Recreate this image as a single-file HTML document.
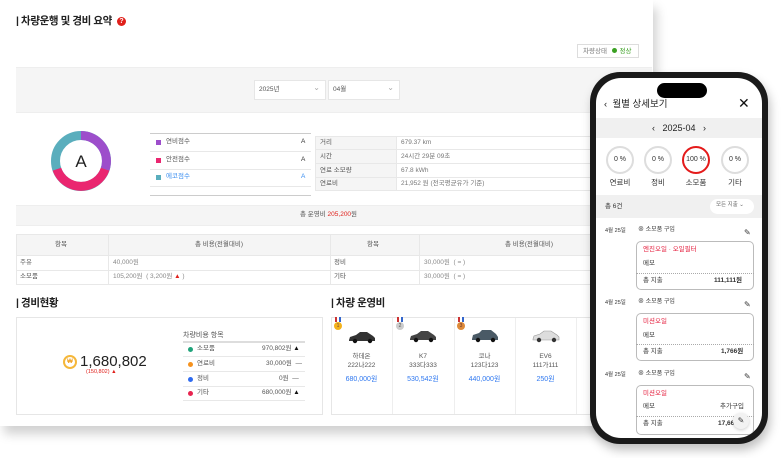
<!DOCTYPE html>
<html><head><meta charset="utf-8"><style>
*{margin:0;padding:0;box-sizing:border-box}
body{width:783px;height:458px;background:#fff;position:relative;overflow:hidden;font-family:"Liberation Sans","Noto Sans CJK KR",sans-serif;color:#333;line-height:1.1}
.a{position:absolute}
.t{font-size:6.5px;color:#555;white-space:nowrap;line-height:1}
.card{left:0;top:0;width:653px;height:426px;background:#fff;box-shadow:4px 8px 10px rgba(0,0,0,.18)}
.h{font-size:10.5px;font-weight:bold;color:#222;line-height:1;letter-spacing:-0.4px}
.gray{background:#f5f5f5}
.sel{background:#fff;border:1px solid #e6e6e6;height:20px;width:72px;top:80px;font-size:6.5px;color:#555;padding:6px 4px;line-height:1}
.sel:after{content:"⌄";position:absolute;right:5px;top:3px;color:#aaa;font-size:8px}
.line{height:1px;background:#e8e8e8}
</style></head><body>
<div class="a card"></div>
<div class="a h" style="left:16px;top:16px">| 차량운행 및 경비 요약</div>
<div class="a" style="left:117px;top:17px;width:9px;height:9px;border-radius:50%;background:#e0201b;color:#fff;font-size:7px;line-height:9px;text-align:center;font-weight:bold">?</div>
<div class="a" style="left:577px;top:44px;width:62px;height:14px;border:1px solid #ddd;font-size:6.5px;color:#777;padding:3px 5px;white-space:nowrap;line-height:1">차량상태 <span style="display:inline-block;width:5px;height:5px;border-radius:50%;background:#3aa022;margin:0 1px 0 3px"></span> <span style="color:#3aa022">정상</span></div>
<div class="a gray" style="left:16px;top:67px;width:636px;height:46px;border-top:1px solid #eee;border-bottom:1px solid #eee"></div>
<div class="a sel" style="left:254px">2025년</div>
<div class="a sel" style="left:328px">04월</div>
<svg class="a" style="left:50px;top:130px" width="62" height="62" viewBox="0 0 62 62">
<g fill="none" stroke-width="9">
<circle cx="31" cy="31" r="25.5" stroke="#5aaebd"/>
<path d="M31 5.5 A25.5 25.5 0 0 1 55.1 39.2" stroke="#9d4ecb"/>
<path d="M55.1 39.2 A25.5 25.5 0 0 1 6.9 39.2" stroke="#ea2670"/>
</g>
<text x="31" y="37" text-anchor="middle" font-size="17" fill="#222" font-family="Liberation Sans">A</text></svg>
<div class="a" style="left:150px;top:133px;width:161px;height:63px;border-top:1px solid #ccc;border-bottom:1px solid #ccc"></div>
<div class="a line" style="left:150px;top:151px;width:161px"></div>
<div class="a line" style="left:150px;top:169px;width:161px"></div>
<div class="a line" style="left:150px;top:186px;width:161px"></div>
<div class="a" style="left:156px;top:140px;width:5px;height:5px;background:#9d4ecb"></div><div class="a t" style="left:166px;top:139px">연비점수</div><div class="a t" style="left:301px;top:139px;color:#333">A</div>
<div class="a" style="left:156px;top:158px;width:5px;height:5px;background:#ea2670"></div><div class="a t" style="left:166px;top:157px">안전점수</div><div class="a t" style="left:301px;top:157px;color:#333">A</div>
<div class="a" style="left:156px;top:175px;width:5px;height:5px;background:#5aaebd"></div><div class="a t" style="left:166px;top:174px;color:#3a8ef0">에코점수</div><div class="a t" style="left:301px;top:174px;color:#3a8ef0">A</div>
<div class="a" style="left:315px;top:136px;width:337px;height:55px;border:1px solid #e8e8e8"></div>
<div class="a gray" style="left:316px;top:137px;width:81px;height:53px;border-right:1px solid #e8e8e8"></div>
<div class="a line" style="left:315px;top:149px;width:337px"></div>
<div class="a line" style="left:315px;top:163px;width:337px"></div>
<div class="a line" style="left:315px;top:177px;width:337px"></div>
<div class="a t" style="left:320px;top:140px">거리</div><div class="a t" style="left:401px;top:140px;color:#777">679.37 km</div>
<div class="a t" style="left:320px;top:154px">시간</div><div class="a t" style="left:401px;top:154px;color:#777">24시간 29분 09초</div>
<div class="a t" style="left:320px;top:168px">연료 소모량</div><div class="a t" style="left:401px;top:168px;color:#777">67.8 kWh</div>
<div class="a t" style="left:320px;top:181px">연료비</div><div class="a t" style="left:401px;top:181px;color:#777">21,952 원 (전국평균유가 기준)</div>
<div class="a gray" style="left:16px;top:205px;width:636px;height:21px;border-top:1px solid #eee;border-bottom:1px solid #eee"></div>
<div class="a t" style="left:300px;top:212px">총 운영비 <span style="color:#e0201b">205,200</span>원</div>
<div class="a" style="left:16px;top:234px;width:636px;height:51px;border:1px solid #e8e8e8"></div>
<div class="a gray" style="left:17px;top:235px;width:635px;height:21px;border-bottom:1px solid #e8e8e8"></div>
<div class="a line" style="left:16px;top:270px;width:636px"></div>
<div class="a" style="left:108px;top:234px;width:1px;height:51px;background:#e8e8e8"></div>
<div class="a" style="left:330px;top:234px;width:1px;height:51px;background:#e8e8e8"></div>
<div class="a" style="left:419px;top:234px;width:1px;height:51px;background:#e8e8e8"></div>
<div class="a t" style="left:55px;top:242px">항목</div><div class="a t" style="left:195px;top:242px">총 비용(전월대비)</div><div class="a t" style="left:367px;top:242px">항목</div><div class="a t" style="left:505px;top:242px">총 비용(전월대비)</div>
<div class="a t" style="left:20px;top:260px">주유</div><div class="a t" style="left:113px;top:260px;color:#888">40,000원</div><div class="a t" style="left:334px;top:260px">정비</div><div class="a t" style="left:424px;top:260px;color:#888">30,000원 &nbsp;( = )</div>
<div class="a t" style="left:20px;top:274px">소모품</div><div class="a t" style="left:113px;top:274px;color:#888">105,200원 &nbsp;( 3,200원 <span style="color:#e0201b">▲</span> )</div><div class="a t" style="left:334px;top:274px">기타</div><div class="a t" style="left:424px;top:274px;color:#888">30,000원 &nbsp;( = )</div>
<div class="a h" style="left:16px;top:298px">| 경비현황</div>
<div class="a" style="left:16px;top:317px;width:307px;height:98px;border:1px solid #e6e6e6"></div>
<div class="a" style="left:63px;top:355px;width:14px;height:14px;border-radius:50%;border:2px solid #f5b73a;color:#f0a020;font-size:6px;text-align:center;line-height:10px;font-weight:bold">₩</div>
<div class="a" style="left:80px;top:354px;font-size:15px;color:#222;line-height:1">1,680,802</div>
<div class="a" style="left:86px;top:370px;font-size:5.5px;color:#e0201b;line-height:1">(150,802) ▲</div>
<div class="a" style="left:183px;top:332px;font-size:7px;color:#555;line-height:1">차량비용 항목</div>
<div class="a" style="left:183px;top:341px;width:122px;height:2px;background:#ddd"></div>
<div class="a line" style="left:183px;top:356px;width:122px"></div>
<div class="a line" style="left:183px;top:371px;width:122px"></div>
<div class="a line" style="left:183px;top:386px;width:122px"></div>
<div class="a line" style="left:183px;top:400px;width:122px"></div>
<div class="a" style="left:188px;top:347px;width:5px;height:5px;border-radius:50%;background:#1fa37a"></div><div class="a t" style="left:197px;top:346px">소모품</div><div class="a t" style="left:262px;top:346px">970,802원 <b style="color:#111">▲</b></div>
<div class="a" style="left:188px;top:362px;width:5px;height:5px;border-radius:50%;background:#f5921e"></div><div class="a t" style="left:197px;top:361px">연료비</div><div class="a t" style="left:266px;top:361px">30,000원 &nbsp;—</div>
<div class="a" style="left:188px;top:377px;width:5px;height:5px;border-radius:50%;background:#2f6bf0"></div><div class="a t" style="left:197px;top:376px">정비</div><div class="a t" style="left:279px;top:376px">0원 &nbsp;—</div>
<div class="a" style="left:188px;top:391px;width:5px;height:5px;border-radius:50%;background:#e8244f"></div><div class="a t" style="left:197px;top:390px">기타</div><div class="a t" style="left:262px;top:390px">680,000원 <b style="color:#111">▲</b></div>
<div class="a h" style="left:331px;top:298px">| 차량 운영비</div>
<div class="a" style="left:331px;top:317px;width:280px;height:98px;border:1px solid #e6e6e6"></div>
<div class="a" style="left:392px;top:318px;width:1px;height:96px;background:#eee"></div>
<div class="a" style="left:454px;top:318px;width:1px;height:96px;background:#eee"></div>
<div class="a" style="left:515px;top:318px;width:1px;height:96px;background:#eee"></div>
<div class="a" style="left:576px;top:318px;width:1px;height:96px;background:#eee"></div>
<div class="a" style="left:334px;top:322px;width:8px;height:8px;border-radius:50%;background:#f3b21c;font-size:5px;text-align:center;line-height:8px;color:#744">1</div>
<div class="a" style="left:396px;top:322px;width:8px;height:8px;border-radius:50%;background:#ccc;font-size:5px;text-align:center;line-height:8px;color:#555">2</div>
<div class="a" style="left:457px;top:322px;width:8px;height:8px;border-radius:50%;background:#de8b3a;font-size:5px;text-align:center;line-height:8px;color:#633">3</div>
<div class="a" style="left:335px;top:317px;width:6px;height:5px;background:linear-gradient(90deg,#c33 33%,#fff 33% 66%,#36c 66%)"></div>
<div class="a" style="left:397px;top:317px;width:6px;height:5px;background:linear-gradient(90deg,#c33 33%,#fff 33% 66%,#36c 66%)"></div>
<div class="a" style="left:458px;top:317px;width:6px;height:5px;background:linear-gradient(90deg,#c33 33%,#fff 33% 66%,#36c 66%)"></div>
<svg class="a" style="left:347px;top:330px" width="30" height="14" viewBox="0 0 30 14"><path d="M2 10 L3 7 L9 5 L13 2 L20 2 L26 6 L28 8 L28 11 L2 11Z" fill="#333"/><circle cx="8" cy="11" r="2.2" fill="#111"/><circle cx="23" cy="11" r="2.2" fill="#111"/></svg>
<svg class="a" style="left:408px;top:329px" width="30" height="14" viewBox="0 0 30 14"><path d="M2 10 L3 7 L9 5 L13 2 L20 2 L26 6 L28 8 L28 11 L2 11Z" fill="#444"/><circle cx="8" cy="11" r="2.2" fill="#111"/><circle cx="23" cy="11" r="2.2" fill="#111"/></svg>
<svg class="a" style="left:470px;top:329px" width="30" height="14" viewBox="0 0 30 14"><path d="M2 10 L3 6 L9 4 L12 1 L21 1 L26 5 L28 8 L28 11 L2 11Z" fill="#4a5a66"/><circle cx="8" cy="11" r="2.2" fill="#111"/><circle cx="23" cy="11" r="2.2" fill="#111"/></svg>
<svg class="a" style="left:531px;top:329px" width="30" height="14" viewBox="0 0 30 14"><path d="M2 10 L3 7 L9 5 L13 2 L20 2 L26 6 L28 8 L28 11 L2 11Z" fill="#ddd" stroke="#999" stroke-width=".6"/><circle cx="8" cy="11" r="2.2" fill="#333"/><circle cx="23" cy="11" r="2.2" fill="#333"/></svg>
<div class="a t" style="left:331px;top:352px;width:61px;text-align:center;line-height:9px">하데온<br>222나222</div>
<div class="a t" style="left:392px;top:352px;width:62px;text-align:center;line-height:9px">K7<br>333다333</div>
<div class="a t" style="left:454px;top:352px;width:61px;text-align:center;line-height:9px">코나<br>123다123</div>
<div class="a t" style="left:515px;top:352px;width:61px;text-align:center;line-height:9px">EV6<br>111가111</div>
<div class="a" style="left:331px;top:376px;width:61px;text-align:center;font-size:7px;color:#2f78f0;line-height:1">680,000원</div>
<div class="a" style="left:392px;top:376px;width:62px;text-align:center;font-size:7px;color:#2f78f0;line-height:1">530,542원</div>
<div class="a" style="left:454px;top:376px;width:61px;text-align:center;font-size:7px;color:#2f78f0;line-height:1">440,000원</div>
<div class="a" style="left:515px;top:376px;width:61px;text-align:center;font-size:7px;color:#2f78f0;line-height:1">250원</div>
<div class="a" style="left:590px;top:72px;width:178px;height:372px;border-radius:30px;background:#1a1a1a;box-shadow:2px 6px 10px rgba(0,0,0,.25)"></div>
<div class="a" style="left:596px;top:78px;width:166px;height:360px;border-radius:25px;background:#fff;overflow:hidden">
 <div class="a" style="left:61px;top:5px;width:50px;height:15px;border-radius:8px;background:#000"></div>
 <div class="a" style="left:8px;top:22px;font-size:9.5px;color:#222">‹ &nbsp;월별 상세보기</div>
 <div class="a" style="left:142px;top:18px;font-size:14px;color:#111">✕</div>
 <div class="a" style="left:0;top:40px;width:166px;height:20px;background:#f0f0f0;text-align:center;font-size:9px;line-height:20px;color:#222">‹ &nbsp;&nbsp;2025-04&nbsp;&nbsp; ›</div>
 <div class="a" style="left:10px;top:68px;width:28px;height:28px;border-radius:50%;border:2.5px solid #ddd;font-size:7px;text-align:center;line-height:23px">0 %</div>
 <div class="a" style="left:48px;top:68px;width:28px;height:28px;border-radius:50%;border:2.5px solid #ddd;font-size:7px;text-align:center;line-height:23px">0 %</div>
 <div class="a" style="left:86px;top:68px;width:28px;height:28px;border-radius:50%;border:2.5px solid #e41a1a;font-size:7px;text-align:center;line-height:23px">100 %</div>
 <div class="a" style="left:125px;top:68px;width:28px;height:28px;border-radius:50%;border:2.5px solid #ddd;font-size:7px;text-align:center;line-height:23px">0 %</div>
 <div class="a" style="left:10px;top:101px;width:28px;text-align:center;font-size:7.5px">연료비</div>
 <div class="a" style="left:48px;top:101px;width:28px;text-align:center;font-size:7.5px">정비</div>
 <div class="a" style="left:84px;top:101px;width:32px;text-align:center;font-size:7.5px">소모품</div>
 <div class="a" style="left:125px;top:101px;width:28px;text-align:center;font-size:7.5px">기타</div>
 <div class="a" style="left:0;top:117px;width:166px;height:23px;background:#f0f0f0"></div>
 <div class="a" style="left:9px;top:125px;font-size:6.5px">총 6건</div>
 <div class="a" style="left:114px;top:121px;width:44px;height:15px;border-radius:8px;background:#fff;font-size:5.5px;color:#666;padding:4px 6px;line-height:1">모든 지출 ⌄</div>
 <div class="a" style="left:9px;top:150px;font-size:5.5px">4월 25일</div>
 <div class="a" style="left:42px;top:149px;font-size:6px">⊗ 소모품 구입</div>
 <div class="a" style="left:148px;top:151px;font-size:8px">✎</div>
 <div class="a" style="left:40px;top:163px;width:118px;height:49px;border:1px solid #bbb;border-radius:5px"></div>
 <div class="a" style="left:47px;top:168px;font-size:6.5px;color:#e41a3a">엔진오일 · 오일필터</div>
 <div class="a" style="left:47px;top:182px;font-size:6.5px">메모</div>
 <div class="a" style="left:40px;top:195px;width:118px;border-top:1px dotted #aaa"></div>
 <div class="a" style="left:47px;top:199px;font-size:6.5px">총 지출</div><div class="a" style="left:118px;top:199px;font-size:6.5px;font-weight:bold">111,111원</div>
 <div class="a" style="left:9px;top:222px;font-size:5.5px">4월 25일</div>
 <div class="a" style="left:42px;top:221px;font-size:6px">⊗ 소모품 구입</div>
 <div class="a" style="left:148px;top:223px;font-size:8px">✎</div>
 <div class="a" style="left:40px;top:235px;width:118px;height:48px;border:1px solid #bbb;border-radius:5px"></div>
 <div class="a" style="left:47px;top:240px;font-size:6.5px;color:#e41a3a">미션오일</div>
 <div class="a" style="left:47px;top:254px;font-size:6.5px">메모</div>
 <div class="a" style="left:40px;top:266px;width:118px;border-top:1px dotted #aaa"></div>
 <div class="a" style="left:47px;top:270px;font-size:6.5px">총 지출</div><div class="a" style="left:125px;top:270px;font-size:6.5px;font-weight:bold">1,766원</div>
 <div class="a" style="left:9px;top:294px;font-size:5.5px">4월 25일</div>
 <div class="a" style="left:42px;top:293px;font-size:6px">⊗ 소모품 구입</div>
 <div class="a" style="left:148px;top:295px;font-size:8px">✎</div>
 <div class="a" style="left:40px;top:307px;width:118px;height:50px;border:1px solid #bbb;border-radius:5px"></div>
 <div class="a" style="left:47px;top:312px;font-size:6.5px;color:#e41a3a">미션오일</div>
 <div class="a" style="left:47px;top:325px;font-size:6.5px">메모</div><div class="a" style="left:124px;top:325px;font-size:6.5px">추가구입</div>
 <div class="a" style="left:40px;top:338px;width:118px;border-top:1px dotted #aaa"></div>
 <div class="a" style="left:47px;top:342px;font-size:6.5px">총 지출</div><div class="a" style="left:122px;top:342px;font-size:6.5px;font-weight:bold">17,66</div>
 <div class="a" style="left:137px;top:335px;width:16px;height:16px;border-radius:50%;background:#f2f2f2;font-size:8px;text-align:center;line-height:16px;box-shadow:0 1px 3px rgba(0,0,0,.2)">✎</div>
</div>
</body></html>
